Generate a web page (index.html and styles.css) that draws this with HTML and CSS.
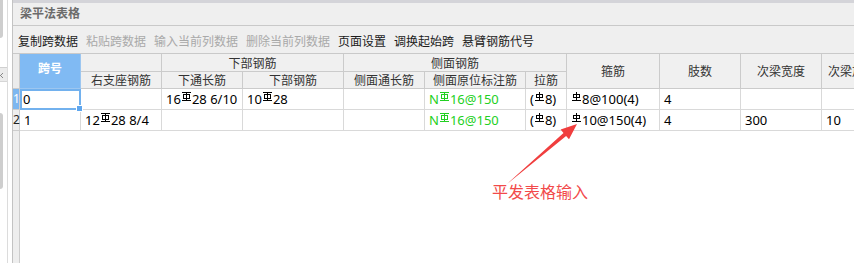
FILE: index.html
```html
<!DOCTYPE html>
<html lang="zh-CN">
<head>
  <meta charset="UTF-8" />
  <title>梁平法表格</title>
  <link rel="stylesheet" href="styles.css">
</head>
<body>
  <svg class="defs">
    <symbol id="r3" viewBox="0 0 9 9">
      <path d="M0 0.5h9M0 8.5h9M4.5 0v9" stroke="currentColor" fill="none"/>
      <rect x="1.5" y="2.5" width="6" height="4" stroke="currentColor" fill="none"/>
    </symbol>
    <symbol id="r2" viewBox="0 0 9 9">
      <path d="M4.5 0v8M0 8.5h9" stroke="currentColor" fill="none"/>
      <rect x="1.5" y="2.5" width="6" height="3" stroke="currentColor" fill="none"/>
    </symbol>
  </svg>

  <div class="side">
    <div class="side-pane">
      <div class="side-thumb"></div>
      <div class="side-tab">
        <svg class="side-close" viewBox="0 0 6 6"><path d="M-2 1l5 5M3 1l-5 5" stroke="#888" fill="none"/></svg>
      </div>
      <div class="side-thumb low"></div>
    </div>
  </div>

  <div class="main">
    <div class="topbar"></div>
    <div class="title">梁平法表格</div>
    <div class="toolbar">
      <span>复制跨数据</span>
      <span class="off">粘贴跨数据</span>
      <span class="off">输入当前列数据</span>
      <span class="off">删除当前列数据</span>
      <span>页面设置</span>
      <span>调换起始跨</span>
      <span>悬臂钢筋代号</span>
    </div>

    <div class="sheet">
      <div class="grid">
        <!-- header row 1 -->
        <div class="hd num tall"></div>
        <div class="hd key tall">跨号</div>
        <div class="hd"></div>
        <div class="hd wide2">下部钢筋</div>
        <div class="hd wide3">侧面钢筋</div>
        <div class="hd tall">箍筋</div>
        <div class="hd tall">肢数</div>
        <div class="hd tall">次梁宽度</div>
        <div class="hd tall">次梁加筋</div>
        <!-- header row 2 -->
        <div class="hd">右支座钢筋</div>
        <div class="hd">下通长筋</div>
        <div class="hd">下部钢筋</div>
        <div class="hd">侧面通长筋</div>
        <div class="hd">侧面原位标注筋</div>
        <div class="hd">拉筋</div>

        <!-- span 1 -->
        <div class="rn sel">1</div>
        <div class="cell sel">0<span class="handle"></span></div>
        <div class="cell"></div>
        <div class="cell">16<svg class="rb"><use href="#r3"/></svg>28 6/10</div>
        <div class="cell">10<svg class="rb"><use href="#r3"/></svg>28</div>
        <div class="cell"></div>
        <div class="cell green">N<svg class="rb"><use href="#r3"/></svg>16@150</div>
        <div class="cell">(<svg class="rb"><use href="#r2"/></svg>8)</div>
        <div class="cell"><svg class="rb"><use href="#r2"/></svg>8@100(4)</div>
        <div class="cell">4</div>
        <div class="cell"></div>
        <div class="cell"></div>

        <!-- span 2 -->
        <div class="rn">2</div>
        <div class="cell">1</div>
        <div class="cell">12<svg class="rb"><use href="#r3"/></svg>28 8/4</div>
        <div class="cell"></div>
        <div class="cell"></div>
        <div class="cell"></div>
        <div class="cell green">N<svg class="rb"><use href="#r3"/></svg>16@150</div>
        <div class="cell">(<svg class="rb"><use href="#r2"/></svg>8)</div>
        <div class="cell"><svg class="rb"><use href="#r2"/></svg>10@150(4)</div>
        <div class="cell">4</div>
        <div class="cell">300</div>
        <div class="cell">10</div>
      </div>
    </div>
  </div>

  <!-- callout -->
  <svg class="arrow" viewBox="0 0 854 263">
    <polygon points="507,184 563.5,132.9 560.6,129.6 577,124 569,139.2 566.1,135.9" fill="#f03e3e"/>
  </svg>
  <div class="note">平发表格输入</div>
</body>
</html>
```

FILE: styles.css
```css
body {
  margin: 0;
  width: 854px;
  height: 263px;
  overflow: hidden;
  display: flex;
  position: relative;
  background: #fff;
  color: #111;
  font-family: "Noto Sans", "Noto Sans CJK SC", sans-serif;
}
.defs {
  position: absolute;
  width: 0;
  height: 0;
}

/* left docked pane, mostly cut off */
.side {
  width: 12px;
  flex: none;
  display: flex;
  border-right: 1px solid #c3c3c3;
}
.side-pane {
  width: 7px;
  display: flex;
  flex-direction: column;
  overflow: hidden;
  border-right: 1px solid #dcdcdc;
}
.side-thumb {
  width: 3px;
  height: 38px;
  background: #cecece;
  border-radius: 0 0 3px 0;
}
.side-tab {
  margin-top: 29px;
  height: 13px;
  display: flex;
  align-items: center;
  background: #ebebeb;
  border-top: 1px solid #d0d0d0;
  border-bottom: 1px solid #d6d6d6;
}
.side-close {
  width: 6px;
  height: 6px;
}
.side-thumb.low {
  margin-top: 31px;
  height: 76px;
  border-radius: 0 3px 3px 0;
}

.main {
  flex: 1;
  min-width: 0;
  display: flex;
  flex-direction: column;
}
.topbar {
  height: 3px;
  background: #d4d4d9;
}
.title {
  height: 22px;
  line-height: 22px;
  padding-left: 7px;
  font-size: 12px;
  font-weight: bold;
  color: #6b6b6b;
  background: #efefef;
  border-bottom: 1px solid #c9c9c9;
}
.toolbar {
  height: 28px;
  box-sizing: border-box;
  display: flex;
  align-items: center;
  gap: 8px;
  padding: 2px 0 0 5px;
  font-size: 12px;
  color: #1b1b1b;
  background: #efefef;
  border-bottom: 1px solid #c9c9c9;
}
.toolbar .off {
  color: #a9a9a9;
}

/* the spreadsheet */
.sheet {
  flex: 1;
  overflow: hidden;
  background: linear-gradient(to right, #eeeeee 0 6px, #cdcdcd 6px 7px, #fff 7px);
}
.grid {
  display: grid;
  grid-template-columns: 7px 61px 81px 81px 101px 81px 101px 41px 93px 81px 81px 61px;
  grid-template-rows: 18px 17px 21px 21px;
  width: max-content;
}
.grid > div {
  box-sizing: border-box;
  white-space: nowrap;
  border-right: 1px solid #d9d9d9;
  border-bottom: 1px solid #d9d9d9;
}
.hd {
  display: flex;
  align-items: center;
  justify-content: center;
  font-size: 12px;
  color: #333;
  background: #f0f0f0;
  border-color: #cbcbcb !important;
}
.hd.tall {
  grid-row: span 2;
}
.hd.wide2 {
  grid-column: span 2;
}
.hd.wide3 {
  grid-column: span 3;
}
.hd.num {
  background: #ececec;
}
.hd.key {
  align-items: flex-start;
  padding-top: 5px;
  font-weight: bold;
  color: #fff;
  background: #80baf3;
  border-color: #9cc6f0 !important;
}

.rn {
  font-size: 12px;
  line-height: 20px;
  color: #222;
  background: #eeeeee;
  border-color: #cdcdcd !important;
}
.rn.sel {
  color: #fff;
  background: #7db7f0;
}
.cell {
  padding-left: 4px;
  font-size: 13px;
  line-height: 20px;
  color: #000;
}
.cell.sel {
  position: relative;
  padding-left: 3px;
  outline: 2px solid #72b1ee;
  outline-offset: -2px;
}
.handle {
  position: absolute;
  right: -3px;
  bottom: -3px;
  width: 5px;
  height: 5px;
  background: #5ea6ee;
  border: 1px solid #fff;
}
.green {
  color: #22d022 !important;
}
.rb {
  width: 9px;
  height: 9px;
  margin: 0 1px;
  vertical-align: 3px;
}

.arrow {
  position: absolute;
  left: 0;
  top: 0;
  width: 854px;
  height: 263px;
  pointer-events: none;
}
.note {
  position: absolute;
  left: 492px;
  top: 180px;
  font-family: "Noto Sans CJK SC", sans-serif;
  font-size: 16px;
  line-height: 22px;
  color: #f24a4a;
}
```
